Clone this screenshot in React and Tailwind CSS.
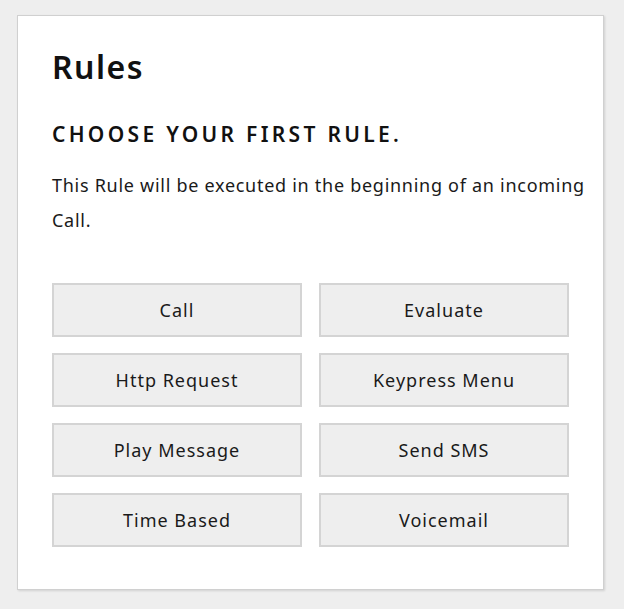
import React from "react";

const items = [
  "Call",
  "Evaluate",
  "Http Request",
  "Keypress Menu",
  "Play Message",
  "Send SMS",
  "Time Based",
  "Voicemail",
];

export default function App() {
  return (
    <div
      className="min-h-[609px] w-full bg-[#eeeeee] pl-[17px] pt-[15px]"
      style={{ fontFamily: '"Noto Sans", "Open Sans", sans-serif' }}
    >
      <div className="w-[587px] border border-[#d0d0d0] bg-white px-[34px] pb-[42px] pt-[27px] shadow-[1px_1px_2px_rgba(0,0,0,0.12)] text-[#111]">
        <h1 className="text-[32px] font-semibold leading-[48px] tracking-[1.5px]">Rules</h1>
        <h2 className="mt-[29px] text-[21px] font-semibold uppercase leading-[28px] tracking-[3.3px]">
          Choose your first rule.
        </h2>
        <p className="mt-[20px] mr-[-30px] text-[18px] leading-[35px] tracking-[0.72px] text-[#1a1a1a]">
          This Rule will be executed in the beginning of an incoming Call.
        </p>
        <div className="mt-[45px] grid grid-cols-2 gap-x-[17px] gap-y-[16px]">
          {items.map((t) => (
            <button
              key={t}
              className="flex h-[54px] items-center justify-center border-2 border-[#d4d4d4] bg-[#eeeeee] text-[18px] tracking-[1px] text-[#1a1a1a]"
            >
              {t}
            </button>
          ))}
        </div>
      </div>
    </div>
  );
}
